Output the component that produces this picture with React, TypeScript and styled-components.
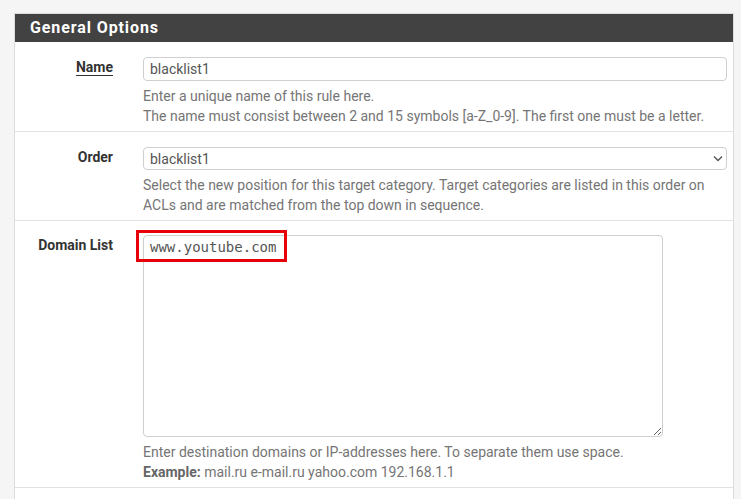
import React from "react";
import styled, { createGlobalStyle } from "styled-components";

const GlobalStyle = createGlobalStyle`
  html, body { margin: 0; padding: 0; background: #f5f5f5; }
  body { font-family: Roboto, "Liberation Sans", Arial, sans-serif; }
  * { box-sizing: border-box; }
`;

const Page = styled.div`
  padding: 13px 7px 0 14px;
  min-height: 499px;
  overflow: hidden;
`;

const Panel = styled.section`
  background: #fff;
  border: 1px solid #dcdcdc;
  border-bottom: none;
  min-height: 500px;
`;

const PanelHeading = styled.h2`
  margin: 0;
  height: 28px;
  background: #424242;
  color: #fff;
  font-size: 16px;
  font-weight: 700;
  letter-spacing: 0.9px;
  line-height: 28px;
  padding-left: 15px;
`;

const Row = styled.div<{ $top?: number }>`
  display: grid;
  grid-template-columns: 98px 1fr;
  column-gap: 30px;
  padding: ${(p) => p.$top ?? 15}px 6px 5px 0;
  border-bottom: 1px solid #e2e2e2;
`;

const Label = styled.label<{ $underline?: boolean }>`
  text-align: right;
  font-size: 14px;
  font-weight: 700;
  color: #333;
  line-height: 20px;
  text-decoration: ${(p) => (p.$underline ? "underline" : "none")};
  text-underline-offset: 3px;
  text-decoration-thickness: 1px;
`;

const Field = styled.div`
  display: flex;
  flex-direction: column;
  align-items: stretch;
  min-width: 0;
`;

const TextInput = styled.input`
  height: 24px;
  width: 100%;
  border: 1px solid #cfcfcf;
  border-radius: 4px;
  padding: 0 6px;
  font-family: Roboto, "Liberation Sans", Arial, sans-serif;
  font-size: 14px;
  color: #555;
  background: #fff;
  outline: none;
`;

const SelectWrap = styled.div`
  position: relative;
  height: 23px;
`;

const Select = styled.select`
  appearance: none;
  -webkit-appearance: none;
  height: 23px;
  width: 100%;
  border: 1px solid #cfcfcf;
  border-radius: 4px;
  padding: 0 24px 0 6px;
  font-family: Roboto, "Liberation Sans", Arial, sans-serif;
  font-size: 14px;
  color: #555;
  background: #fff;
  outline: none;
`;

const Chevron = styled.svg`
  position: absolute;
  right: 4px;
  top: 8px;
  width: 10px;
  height: 7px;
  pointer-events: none;
`;

const Help = styled.div`
  margin-top: 5px;
  font-size: 14px;
  line-height: 20px;
  color: #757575;
`;

const Strong = styled.strong`
  font-weight: 700;
  color: #666;
`;

const AreaWrap = styled.div`
  position: relative;
  width: 520px;
`;

const TextArea = styled.textarea`
  display: block;
  width: 520px;
  height: 202px;
  border: 1px solid #cfcfcf;
  border-radius: 4px;
  padding: 1px 6px;
  font-family: "DejaVu Sans Mono", "Liberation Mono", monospace;
  font-size: 14px;
  line-height: 20px;
  color: #555;
  background: #fff;
  outline: none;
`;

const Highlight = styled.div`
  position: absolute;
  left: -7px;
  top: -5px;
  width: 151px;
  height: 32px;
  border: 3px solid #e8000b;
  pointer-events: none;
`;

export default function App() {
  return (
    <>
      <GlobalStyle />
      <Page>
        <Panel>
          <PanelHeading>General Options</PanelHeading>
          <Row>
            <Label $underline>Name</Label>
            <Field>
              <TextInput defaultValue="blacklist1" />
              <Help>
                Enter a unique name of this rule here.
                <br />
                The name must consist between 2 and 15 symbols [a-Z_0-9]. The first one must be a letter.
              </Help>
            </Field>
          </Row>
          <Row>
            <Label>Order</Label>
            <Field>
              <SelectWrap>
                <Select defaultValue="blacklist1">
                  <option value="blacklist1">blacklist1</option>
                </Select>
                <Chevron viewBox="0 0 10 7">
                  <path d="M1 1.5 L5 5.5 L9 1.5" fill="none" stroke="#555" strokeWidth="1.4" />
                </Chevron>
              </SelectWrap>
              <Help>
                Select the new position for this target category. Target categories are listed in this order on ACLs and are matched from the top down in sequence.
              </Help>
            </Field>
          </Row>
          <Row $top={14}>
            <Label>Domain List</Label>
            <Field>
              <AreaWrap>
                <TextArea defaultValue="www.youtube.com" spellCheck={false} />
                <Highlight />
              </AreaWrap>
              <Help>
                Enter destination domains or IP-addresses here. To separate them use space.
                <br />
                <Strong>Example:</Strong> mail.ru e-mail.ru yahoo.com 192.168.1.1
              </Help>
            </Field>
          </Row>
        </Panel>
      </Page>
    </>
  );
}
